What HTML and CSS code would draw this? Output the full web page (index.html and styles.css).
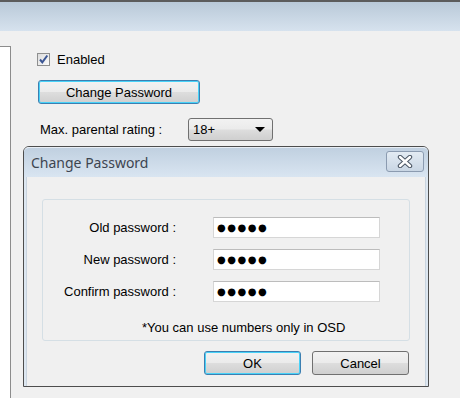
FILE: index.html
```html
<!DOCTYPE html>
<html lang="en">
<head>
  <meta charset="UTF-8" />
  <title>Parental Control</title>
  <link rel="stylesheet" href="styles.css">
</head>
<body>
<div class="topbar"></div>
<div class="page">
  <div class="sidebar"></div>
  <div class="settings">
    <label class="check-row">
      <span class="checkbox">
        <svg width="11" height="11" viewBox="0 0 11 11"><path d="M2 5.5 L4.3 8.3 L9.3 1.5" fill="none" stroke="#3b5694" stroke-width="2"/></svg>
      </span>
      <span>Enabled</span>
    </label>
    <button class="win-btn change-btn focused">Change Password</button>
    <div class="rating-row">
      <span class="rating-label">Max. parental rating :</span>
      <div class="combo">
        <span>18+</span>
        <span class="combo-arrow"></span>
      </div>
    </div>
  </div>

  <!-- Change password dialog -->
  <div class="dialog">
    <div class="dialog-title">
      <span>Change Password</span>
      <button class="close-btn">
        <svg width="16" height="13" viewBox="0 0 16 13">
          <path d="M3 2 L13 11 M13 2 L3 11" stroke="#4a5563" stroke-width="4.4" stroke-linecap="round"/>
          <path d="M3 2 L13 11 M13 2 L3 11" stroke="#fff" stroke-width="2.4" stroke-linecap="round"/>
        </svg>
      </button>
    </div>
    <div class="dialog-body">
      <div class="group">
        <div class="fields">
          <span class="field-label">Old password :</span>
          <div class="pw-input">●●●●●</div>
          <span class="field-label">New password :</span>
          <div class="pw-input">●●●●●</div>
          <span class="field-label">Confirm password :</span>
          <div class="pw-input">●●●●●</div>
        </div>
        <p class="note">*You can use numbers only in OSD</p>
      </div>
      <div class="dialog-buttons">
        <button class="win-btn dlg-btn focused">OK</button>
        <button class="win-btn dlg-btn">Cancel</button>
      </div>
    </div>
  </div>
</div>
</body>
</html>
```

FILE: styles.css
```css
* { box-sizing: border-box; }
body { margin:0; background:#f0f0f0; font-family:'Liberation Sans',Arial,sans-serif; font-size:13px; color:#000; height:398px; overflow:hidden; }
.topbar { height:31px; border-top:2px solid #5c5c5c; background:linear-gradient(#b9c9d8,#d6e2ee); }
.page { display:flex; margin-top:15px; height:352px; position:relative; }
.sidebar { width:11px; background:#fff; border-top:1px solid #8c8c8c; border-right:1px solid #8c8c8c; }
.settings { padding:7px 0 0 26px; display:flex; flex-direction:column; align-items:flex-start; }
.check-row { display:flex; align-items:center; gap:7px; height:13px; }
.checkbox { width:13px; height:13px; border:1px solid #8e8f8f; background:linear-gradient(135deg,#dcdcdc,#fbfbfb); display:flex; align-items:center; justify-content:center; }
.win-btn { font-family:'Liberation Sans',Arial,sans-serif; font-size:13px; color:#000; border:1px solid #707070; border-radius:3px; background:linear-gradient(#f2f2f2 0%,#ebebeb 48%,#dddddd 52%,#cfcfcf 100%); padding:0; }
.win-btn.focused { border-color:#3c7fb1; box-shadow:inset 0 0 0 1px #48d2f8; }
.change-btn { width:162px; height:24px; margin:14px 0 0 1px; }
.rating-row { display:flex; align-items:center; margin-top:14px; padding-left:3px; }
.rating-label { width:148px; }
.combo { width:85px; height:23px; border:1px solid #707070; border-radius:3px; background:linear-gradient(#f2f2f2 0%,#ebebeb 48%,#dddddd 52%,#cfcfcf 100%); display:flex; align-items:center; justify-content:space-between; padding:0 7px 0 4px; }
.combo-arrow { width:0; height:0; border-left:5px solid transparent; border-right:5px solid transparent; border-top:5px solid #000; }
/* Dialog */
.dialog { position:absolute; left:23px; top:100px; width:406px; height:241px; border:1px solid #4d4d4d; border-radius:6px 6px 0 0; background:#dde7f1; display:flex; flex-direction:column; }
.dialog-title { height:30px; display:flex; justify-content:space-between; align-items:center; padding:0 4px 0 7px; background:linear-gradient(#c0d0e0,#d9e5f1); border-radius:5px 5px 0 0; border-top:1px solid #e8eef5; font-family:'Noto Sans','Open Sans',sans-serif; font-size:14px; color:#3d4550; }
.close-btn { width:38px; height:21px; border:1px solid #8b9bb0; border-radius:3px; background:linear-gradient(#e3ebf3,#c9d6e4); display:flex; align-items:center; justify-content:center; padding:0; margin-top:-3px; }
.dialog-body { flex:1; background:#f0f0f0; margin:0 2px 0 2px; border-left:1px solid #c9d4df; border-right:1px solid #c9d4df; padding:22px 15px 0 15px; }
.group { border:1px solid #d5dfe5; border-radius:3px; padding:17px 0 5px 0; }
.fields { display:grid; grid-template-columns:133px 167px; column-gap:37px; row-gap:11px; align-items:center; }
.field-label { text-align:right; }
.pw-input { height:21px; background:#fff; border:1px solid #d6d6d6; border-top-color:#bcbcbc; padding:0 0 0 3px; font-family:'DejaVu Sans',sans-serif; font-size:10px; letter-spacing:1.5px; line-height:19px; }
.note { margin:18px 0 0 99px; line-height:15px; }
.dialog-buttons { display:flex; justify-content:flex-end; gap:11px; margin-top:10px; padding-right:1px; }
.dlg-btn { width:97px; height:24px; }
```
